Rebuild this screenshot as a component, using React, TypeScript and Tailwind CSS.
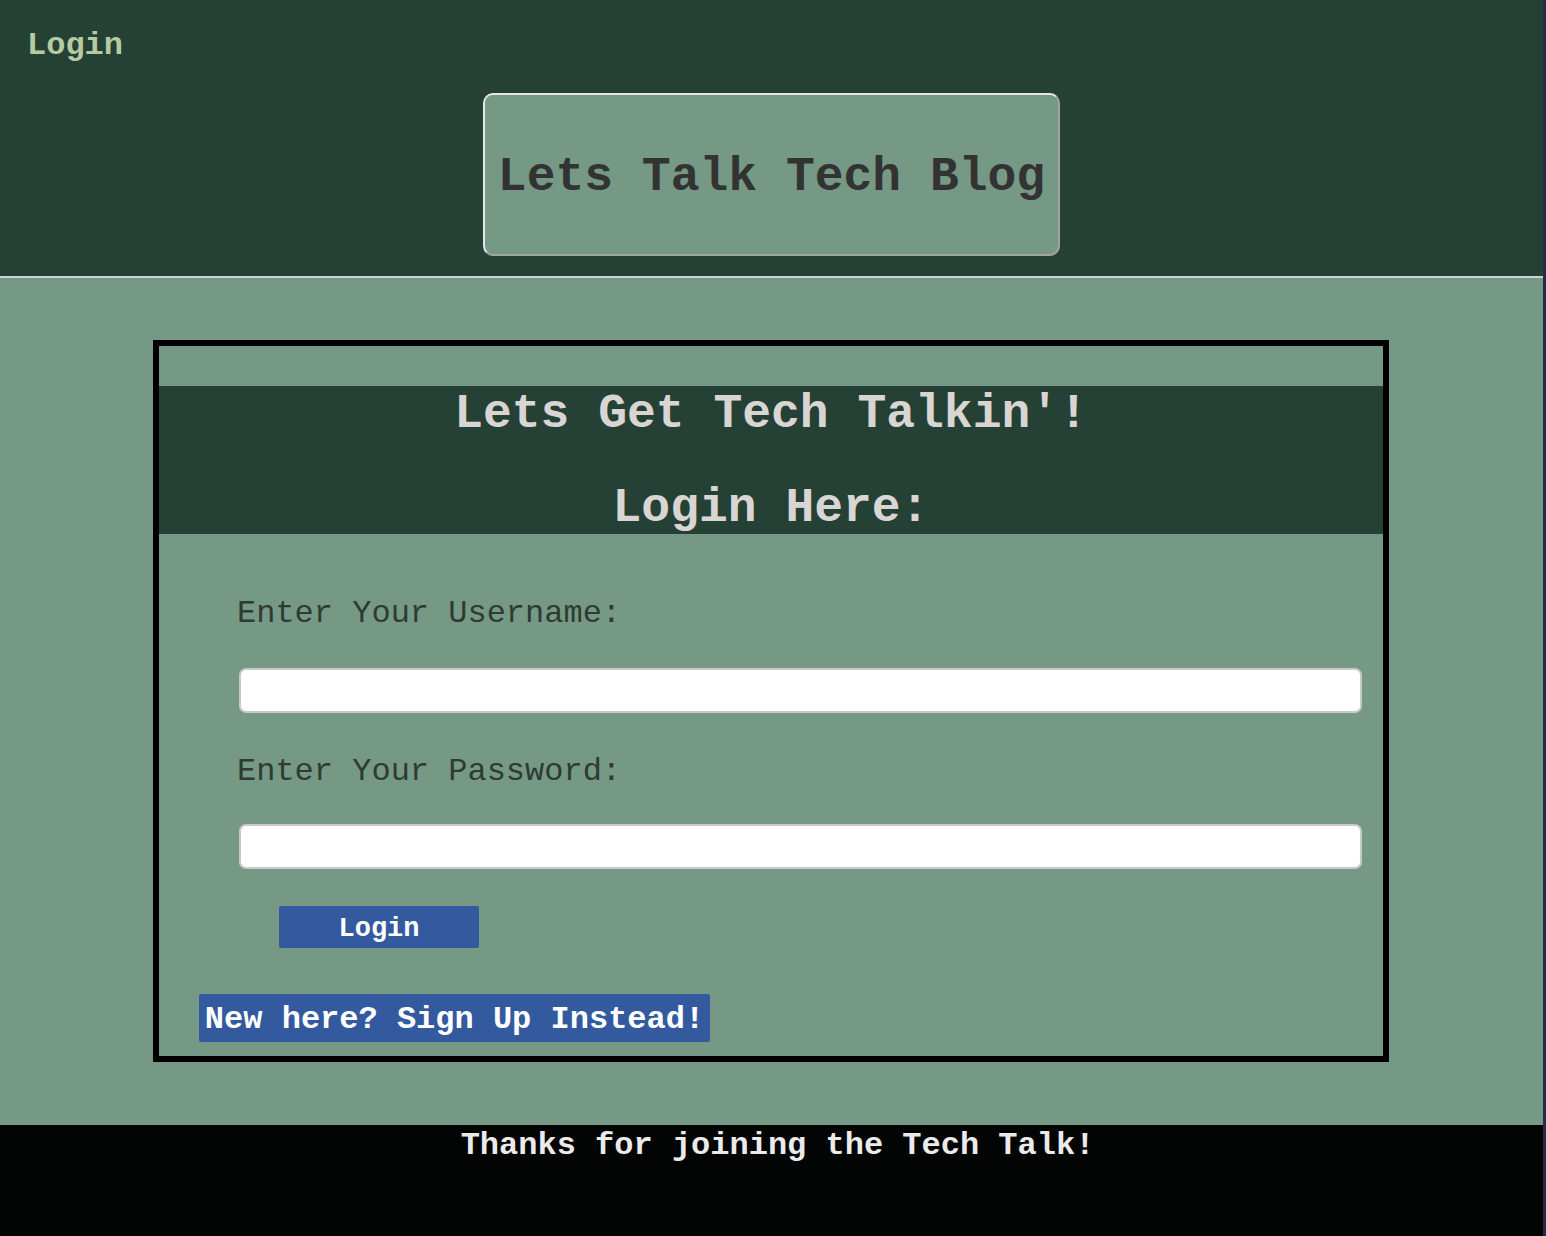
export default function App() {
  return (
    <div className="flex min-h-screen w-full bg-[#23233c] font-['Liberation_Mono','Courier_New',monospace]">
      <div className="flex flex-1 flex-col">
        {/* header */}
        <header className="flex flex-col bg-[#254034] pt-[28px] pb-[20px]">
          <a href="#" className="pl-[27px] text-[32px] font-bold leading-[36px] text-[#b7cba2]">
            Login
          </a>
          <div className="mx-auto mt-[29px] flex h-[163px] w-[577px] items-center justify-center rounded-[10px] border-2 border-t-[#e6e6e6] border-l-[#e6e6e6] border-r-[#a3a3a3] border-b-[#a3a3a3] bg-[#759985] pt-[4px]">
            <h1 className="text-[48px] font-bold leading-[54px] text-[#333333]">Lets Talk Tech Blog</h1>
          </div>
        </header>
        <div className="h-[2px] bg-[#cfd3d0]" />

        {/* main */}
        <main className="flex flex-1 justify-center bg-[#759985] pt-[62px] pb-[63px] pr-px">
          <section className="flex w-[1236px] flex-col border-[6px] border-black">
            <div className="mt-[40px] flex flex-col items-center bg-[#254034] pt-[4px] pb-[2px] text-[48px] font-bold leading-[48px] text-[#d9d5d2]">
              <h2>Lets Get Tech Talkin'!</h2>
              <h2 className="mt-[46px]">Login Here:</h2>
            </div>

            {/* login form */}
            <form className="flex flex-col pt-[62px] pb-[14px]">
              <label className="pl-[78px] text-[32px] leading-[36px] text-[#2f3a33]">Enter Your Username:</label>
              <input
                type="text"
                className="mt-[36px] ml-[80px] h-[45px] w-[1123px] rounded-[7px] border-2 border-[#c9c9c9] bg-white"
              />
              <label className="mt-[41px] pl-[78px] text-[32px] leading-[36px] text-[#2f3a33]">Enter Your Password:</label>
              <input
                type="password"
                className="mt-[34px] ml-[80px] h-[45px] w-[1123px] rounded-[7px] border-2 border-[#c9c9c9] bg-white"
              />
              <button
                type="button"
                className="mt-[37px] ml-[120px] h-[42px] w-[200px] rounded-[2px] bg-[#335a9f] pt-[3px] text-[27px] font-bold leading-[30px] text-white"
              >
                Login
              </button>
              <button
                type="button"
                className="mt-[46px] ml-[40px] h-[48px] w-[511px] rounded-[2px] bg-[#335a9f] pt-[3px] text-[32px] font-bold leading-[36px] text-white"
              >
                New here? Sign Up Instead!
              </button>
            </form>
          </section>
        </main>

        {/* footer */}
        <footer className="h-[111px] bg-[#030505] pt-[3px] pl-[12px] text-center text-[32px] font-bold leading-[36px] text-[#ebebeb]">
          Thanks for joining the Tech Talk!
        </footer>
      </div>
      <div className="w-[3px] bg-[#2a2a46]" />
    </div>
  );
}
